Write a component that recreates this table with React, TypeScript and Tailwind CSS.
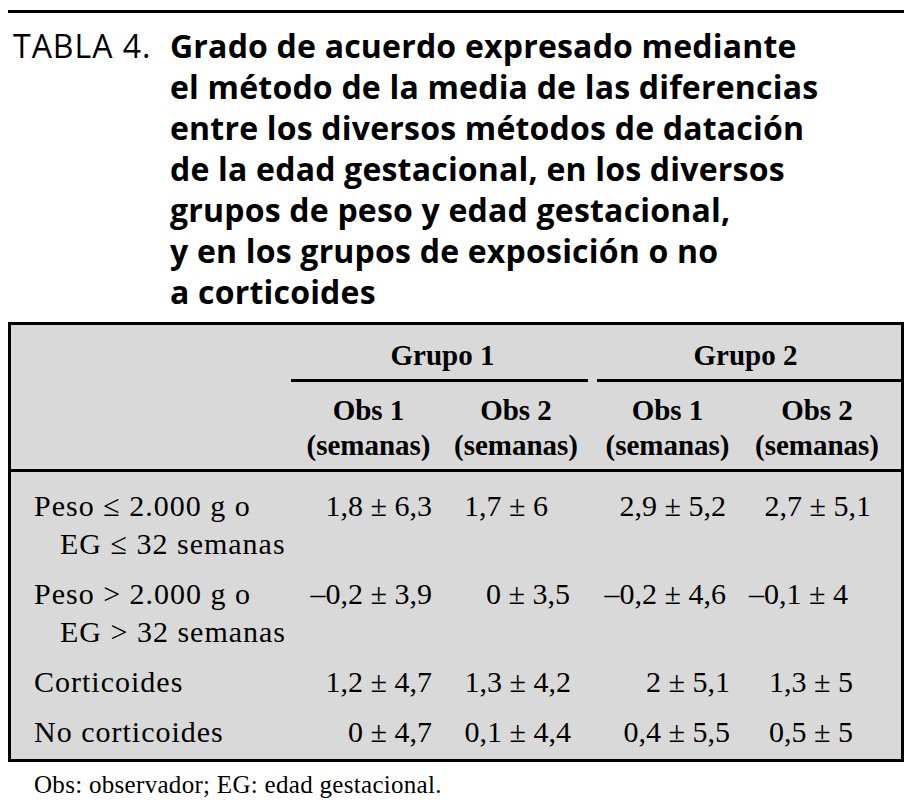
const titleLines = [
  "Grado de acuerdo expresado mediante",
  "el método de la media de las diferencias",
  "entre los diversos métodos de datación",
  "de la edad gestacional, en los diversos",
  "grupos de peso y edad gestacional,",
  "y en los grupos de exposición o no",
  "a corticoides",
]

type Cell = { t: string; pr: string }

const rows: { label: string[]; cells: Cell[] }[] = [
  {
    label: ["Peso ≤ 2.000 g o", "EG ≤ 32 semanas"],
    cells: [
      { t: "1,8 ± 6,3", pr: "pr-[10px]" },
      { t: "1,7 ± 6", pr: "pr-[42px]" },
      { t: "2,9 ± 5,2", pr: "pr-[19px]" },
      { t: "2,7 ± 5,1", pr: "pr-[30px]" },
    ],
  },
  {
    label: ["Peso > 2.000 g o", "EG > 32 semanas"],
    cells: [
      { t: "–0,2 ± 3,9", pr: "pr-[10px]" },
      { t: "0 ± 3,5", pr: "pr-[20px]" },
      { t: "–0,2 ± 4,6", pr: "pr-[19px]" },
      { t: "–0,1 ± 4", pr: "pr-[53px]" },
    ],
  },
  {
    label: ["Corticoides"],
    cells: [
      { t: "1,2 ± 4,7", pr: "pr-[10px]" },
      { t: "1,3 ± 4,2", pr: "pr-[19px]" },
      { t: "2 ± 5,1", pr: "pr-[15px]" },
      { t: "1,3 ± 5", pr: "pr-[48px]" },
    ],
  },
  {
    label: ["No corticoides"],
    cells: [
      { t: "0 ± 4,7", pr: "pr-[10px]" },
      { t: "0,1 ± 4,4", pr: "pr-[19px]" },
      { t: "0,4 ± 5,5", pr: "pr-[15px]" },
      { t: "0,5 ± 5", pr: "pr-[48px]" },
    ],
  },
]

const grid = "grid grid-cols-[284px_147px_148px_155px_156px]"

export default function App() {
  return (
    <div className="min-h-[804px] w-[915px] bg-white pl-[8px] pt-[10px] text-black">
      <div className="w-[896px]">
        {/* top rule + caption */}
        <div className="h-[3px] bg-black" />
        <div className="mt-[12px] flex font-['Open_Sans','Lato',sans-serif] text-[32px] leading-[41px]">
          <div className="w-[162px] shrink-0 pl-[5px] tracking-[1px]">TABLA 4.</div>
          <div className="font-bold tracking-[0.2px]">
            {titleLines.map((l) => (
              <div key={l} className="whitespace-nowrap">{l}</div>
            ))}
          </div>
        </div>

        {/* table */}
        <div className="mt-[10px] border-[3px] border-black bg-[#d9d9d9] font-['Liberation_Serif','Times_New_Roman',serif]">
          <div className="border-b-[3px] border-black pb-[6px] pt-[12px] text-[29px] font-bold">
            <div className={grid + " leading-[36px]"}>
              <div />
              <div className="col-span-2 text-center">Grupo 1</div>
              <div className="col-span-2 text-center">Grupo 2</div>
            </div>
            <div className={grid + " mt-[6px]"}>
              <div />
              <div className="col-span-2 -ml-[4px] mr-[2px] h-[3px] bg-black" />
              <div className="col-span-2 ml-[7px] h-[3px] bg-black" />
            </div>
            <div className={grid + " mt-[11px] leading-[35px]"}>
              <div />
              <div className="text-center">
                Obs 1<br />(semanas)
              </div>
              <div className="text-center">
                Obs 2<br />(semanas)
              </div>
              <div className="text-center">
                Obs 1<br />(semanas)
              </div>
              <div className="pr-[12px] text-center">
                Obs 2<br />(semanas)
              </div>
            </div>
          </div>

          <div className="pb-[2px] pt-[9px] text-[30px] leading-[38px]">
            {rows.map((r) => (
              <div key={r.label[0]} className={grid + " py-[6px]"}>
                <div className="pl-[23px] tracking-[1px]">
                  {r.label.map((l, i) => (
                    <div key={l} className={i > 0 ? "pl-[26px]" : ""}>
                      {l}
                    </div>
                  ))}
                </div>
                {r.cells.map((c, i) => (
                  <div key={i} className={"whitespace-nowrap text-right " + c.pr}>
                    {c.t}
                  </div>
                ))}
              </div>
            ))}
          </div>
        </div>

        <div className="mt-[6px] pl-[26px] font-['Liberation_Serif','Times_New_Roman',serif] text-[25px] leading-[34px] tracking-[0.3px]">
          Obs: observador; EG: edad gestacional.
        </div>
      </div>
    </div>
  )
}
